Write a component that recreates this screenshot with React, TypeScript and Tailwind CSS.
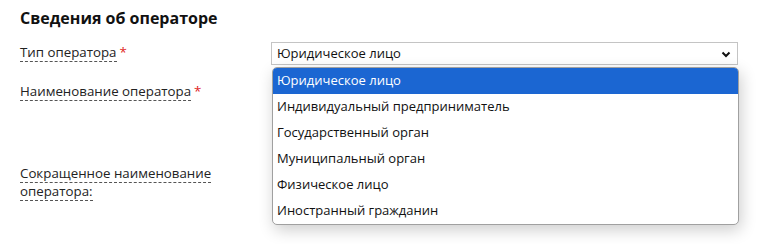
import React from 'react';

const options = [
    'Юридическое лицо',
    'Индивидуальный предприниматель',
    'Государственный орган',
    'Муниципальный орган',
    'Физическое лицо',
    'Иностранный гражданин',
];

const Label: React.FC<{ text: string; required?: boolean }> = ({ text, required }) => (
    <div className="w-[251px] shrink-0 pr-4 leading-[18px] text-[13.3px]">
        <span className="border-b border-dashed border-[#555] text-[#222]">{text}</span>
        {required && <span className="text-[#e02424] ml-[3px]">*</span>}
    </div>
);

export default function App() {
    return (
        <div className="w-[764px] h-[244px] bg-white overflow-hidden relative" style={{ fontFamily: '"Open Sans", "Noto Sans", sans-serif' }}>
            <div className="pl-5 pt-[7px] text-[13px]">
                <h2 className="text-[16px] font-bold text-[#111] leading-[22px]">Сведения об операторе</h2>

                {/* Тип оператора */}
                <div className="flex mt-[13px] h-[40px]">
                    <div className="pt-[1px]">
                        <Label text="Тип оператора" required />
                    </div>
                    <div className="relative w-[467px]">
                        <div className="h-[23px] border border-[#c4c4c4] bg-white flex items-center justify-between pl-[5px] pr-[6px] text-[#111]">
                            <span>Юридическое лицо</span>
                            <svg className="w-[10px] h-[10px]" viewBox="0 0 10 10" fill="none" stroke="#111" strokeWidth={2}>
                                <path d="M1.5 3.5 L5 7 L8.5 3.5" />
                            </svg>
                        </div>
                    </div>
                </div>

                {/* Наименование оператора */}
                <div className="flex h-[82px]">
                    <Label text="Наименование оператора" required />
                </div>

                {/* Сокращенное наименование */}
                <div className="flex">
                    <div className="w-[215px] leading-[18px] text-[13.3px] text-[#222]">
                        <span className="border-b border-dashed border-[#555]">Сокращенное наименование</span>
                        <br />
                        <span className="border-b border-dashed border-[#555]">оператора:</span>
                    </div>
                </div>
            </div>

            {/* Выпадающий список */}
            <div className="absolute left-[272px] top-[67px] w-[467px] bg-white border border-[#a0a0a0] rounded-[5px] overflow-hidden shadow-[2px_5px_16px_rgba(0,0,0,0.2)] text-[13px]">
                {options.map((o, i) => (
                    <div
                        key={o}
                        className={
                            i === 0
                                ? 'h-[26px] flex items-center px-[4px] bg-[#1b66d2] text-white'
                                : 'h-[26px] flex items-center px-[4px] text-[#111]'
                        }
                    >
                        {o}
                    </div>
                ))}
            </div>
        </div>
    );
}
